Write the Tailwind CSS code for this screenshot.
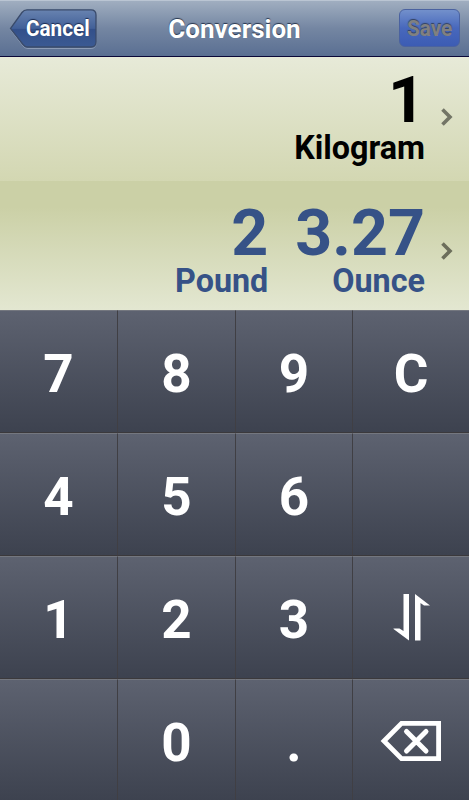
<!doctype html>
<html lang="en">

<head>
    <meta charset="UTF-8">
    <meta name="viewport" content="width=device-width, initial-scale=1.0">
    <title>Conversion</title>
    <script src="https://cdn.jsdelivr.net/npm/@tailwindcss/browser@4"></script>
</head>

<body class="w-[469px] h-[800px] overflow-hidden font-['Roboto',sans-serif] font-bold">
    <header class="h-[57px] flex items-start justify-between pl-[9px] pr-[9px] pt-2 border-t border-t-[#bac5d3] border-b border-b-[#0a0838] bg-linear-to-b from-[#a0aec0] via-[#7486a2] to-[#5a6f92]">
        <button class="relative w-[88px] h-10 pl-[17px] text-[22.5px] leading-[37px] text-white text-left text-shadow-[0_-1px_1px_#1c2b50]">
            <svg class="absolute inset-0" width="88" height="40" viewBox="0 0 88 40" fill="none">
                <defs>
                    <linearGradient id="back" x1="0" y1="0" x2="0" y2="1">
                        <stop offset="0" stop-color="#6883b0" />
                        <stop offset=".5" stop-color="#426098" />
                        <stop offset=".52" stop-color="#33508a" />
                        <stop offset="1" stop-color="#3b5a93" />
                    </linearGradient>
                </defs>
                <path d="M19 2H82Q87 2 87 7V34Q87 39.500 82 39.500H19Q16 39.500 14 37L1 20" stroke="#8c9cb6" />
                <path d="M18 .8H82Q87 .8 87 6V33Q87 38 82 38H18Q16 38 14 35.500L1.500 19.500L13 3.500Q15 .8 18 .8Z" fill="url(#back)" stroke="#3a4b6b" stroke-width="1.300" />
            </svg>
            <span class="relative -top-px inline-block origin-left scale-x-[.92]">Cancel</span>
        </button>
        <h1 class="w-[150px] text-center text-[26px] leading-[40px] text-white text-shadow-[0_-1px_1px_#27344c]">Conversion</h1>
        <div class="w-[88px] flex justify-end">
            <button class="w-[61px] h-[38px] rounded-[6px] border border-[#4a62a0] bg-linear-to-b from-[#7390cb] via-[#4868bc] to-[#3c5cb4] text-[22.5px] leading-[37px] text-[#808080] text-shadow-[0_-1px_1px_#33405e]"><span class="inline-block scale-x-[.92]">Save</span></button>
        </div>
    </header>

    <main class="h-[253px] text-[32.3px] leading-[36px]">
        <section class="h-[124px] pt-[13px] pr-[16px] flex justify-end bg-linear-to-b from-[#e7ead8] to-[#d3d7b2]">
            <div class="text-right text-black">
                <div class="text-[64.5px] leading-[60px]">1</div>
                <div>Kilogram</div>
            </div>
            <svg class="ml-4 mt-[38px]" width="12" height="18" viewBox="0 0 12 18" fill="none" stroke="#737566" stroke-width="3.600">
                <path d="M1.500 1.500L9 9L1.500 16.500" />
            </svg>
        </section>
        <section class="h-[129px] pt-[22px] pr-[16px] flex justify-end bg-linear-to-b from-[#cbd0a6] from-20% to-[#e3e7d1] text-[#365287]">
            <div class="text-right">
                <div class="text-[64.5px] leading-[60px]">2</div>
                <div>Pound</div>
            </div>
            <div class="ml-[27px] text-right">
                <div class="text-[64.5px] leading-[60px]">3.27</div>
                <div>Ounce</div>
            </div>
            <svg class="ml-4 mt-[39px]" width="12" height="18" viewBox="0 0 12 18" fill="none" stroke="#6c6e5b" stroke-width="3.600">
                <path d="M1.500 1.500L9 9L1.500 16.500" />
            </svg>
        </section>
    </main>

    <div class="grid grid-cols-[118px_118px_117px_117px] auto-rows-[123px] text-[53px] text-white text-center leading-[126px] *:border-r *:border-r-[#403f44] *:border-t *:border-t-[#74777f] *:border-b *:border-b-[#3b393c] *:bg-linear-to-b *:from-[#5d6270] *:to-[#3d424f] text-shadow-[0_1px_1px_#292d38]">
        <button>7</button>
        <button>8</button>
        <button>9</button>
        <button>C</button>
        <button>4</button>
        <button>5</button>
        <button>6</button>
        <button></button>
        <button>1</button>
        <button>2</button>
        <button>3</button>
        <button class="flex items-center justify-center pb-[2px]">
            <svg width="38" height="48" viewBox="0 0 38 48" fill="#fff">
                <path d="M11.500 1H17V47.500L1.500 36V35.500H7.500L11.500 38Z" />
                <path d="M23 1L38 12.500H32L28.500 10V47.500H23Z" />
            </svg>
        </button>
        <button></button>
        <button>0</button>
        <button>.</button>
        <button class="flex items-center justify-center">
            <svg width="62" height="42" viewBox="0 0 62 42" fill="none" stroke="#fff" stroke-width="4.800">
                <path d="M4 21L21.500 3.400H58.600V38.600H21.500Z" />
                <path d="M26.500 11.500L46 31M46 11.500L26.500 31" stroke-width="5" stroke-linecap="round" />
            </svg>
        </button>
    </div>
</body>

</html>
